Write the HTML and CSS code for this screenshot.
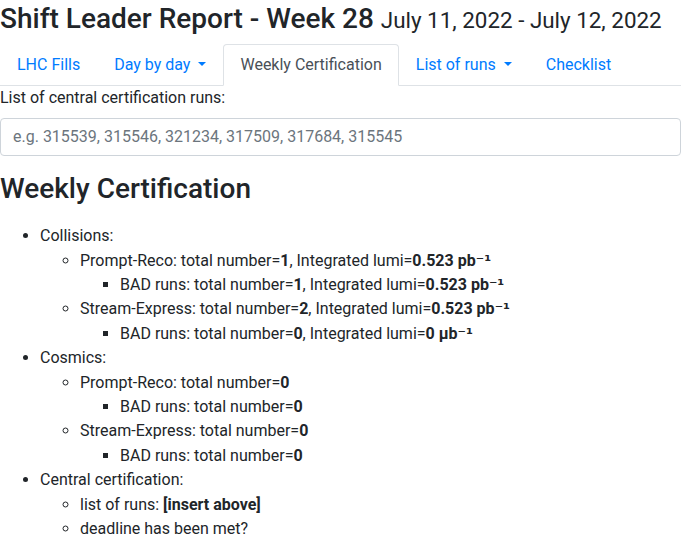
FILE: index.html
```html
<!DOCTYPE html>
<html lang="en">
<head>
    <meta charset="UTF-8">
    <meta name="viewport" content="width=device-width, initial-scale=1.0">
    <title>Shift Leader Report</title>
    <link rel="stylesheet" href="styles.css">
</head>
<body>

    <h3 class="title">Shift Leader Report - Week 28 <small>July 11, 2022 - July 12, 2022</small></h3>

    <ul class="nav-tabs">
        <li><a class="nav-link" href="#">LHC Fills</a></li>
        <li><a class="nav-link dropdown-toggle" href="#">Day by day</a></li>
        <li><a class="nav-link active" href="#">Weekly Certification</a></li>
        <li><a class="nav-link dropdown-toggle" href="#">List of runs</a></li>
        <li><a class="nav-link" href="#">Checklist</a></li>
    </ul>

    <div class="form-group">
        <label for="runs">List of central certification runs:</label>
        <input type="text" id="runs" class="form-control" placeholder="e.g. 315539, 315546, 321234, 317509, 317684, 315545">
    </div>

    <h3 class="section-title">Weekly Certification</h3>

    <ul class="report">
        <li>Collisions:
            <ul>
                <li>Prompt-Reco: total number=<b>1</b>, Integrated lumi=<b>0.523 pb<span class="unit">⁻¹</span></b>
                    <ul>
                        <li>BAD runs: total number=<b>1</b>, Integrated lumi=<b>0.523 pb<span class="unit">⁻¹</span></b></li>
                    </ul>
                </li>
                <li>Stream-Express: total number=<b>2</b>, Integrated lumi=<b>0.523 pb<span class="unit">⁻¹</span></b>
                    <ul>
                        <li>BAD runs: total number=<b>0</b>, Integrated lumi=<b>0 μb<span class="unit">⁻¹</span></b></li>
                    </ul>
                </li>
            </ul>
        </li>
        <li>Cosmics:
            <ul>
                <li>Prompt-Reco: total number=<b>0</b>
                    <ul>
                        <li>BAD runs: total number=<b>0</b></li>
                    </ul>
                </li>
                <li>Stream-Express: total number=<b>0</b>
                    <ul>
                        <li>BAD runs: total number=<b>0</b></li>
                    </ul>
                </li>
            </ul>
        </li>
        <li>Central certification:
            <ul>
                <li>list of runs: <b>[insert above]</b></li>
                <li>deadline has been met?</li>
            </ul>
        </li>
    </ul>

</body>
</html>
```

FILE: styles.css
```css
body {
    margin: 0;
    font-family: Roboto, "Liberation Sans", sans-serif;
    font-size: 16px;
    line-height: 1.5;
    color: #212529;
    background-color: #fff;
}

.title {
    margin: 2px 0 8px 0;
    font-size: 28px;
    font-weight: 500;
    line-height: 1.2;
}

.title small {
    font-size: 80%;
    font-weight: 400;
}

.nav-tabs {
    display: flex;
    list-style: none;
    margin: 0;
    padding: 0;
    border-bottom: 1px solid #dee2e6;
}

.nav-tabs li {
    margin-bottom: -1px;
}

.nav-link {
    display: block;
    padding: 8px 16px;
    color: #007bff;
    text-decoration: none;
    border: 1px solid transparent;
    border-top-left-radius: 4px;
    border-top-right-radius: 4px;
}

.nav-link.active {
    color: #495057;
    background-color: #fff;
    border-color: #dee2e6 #dee2e6 #fff;
}

.dropdown-toggle::after {
    display: inline-block;
    margin-left: 8px;
    vertical-align: 0.255em;
    content: "";
    border-top: 0.3em solid;
    border-right: 0.3em solid transparent;
    border-left: 0.3em solid transparent;
}

.form-group {
    margin-bottom: 16px;
}

label {
    display: inline-block;
    margin-bottom: 8px;
}

.form-control {
    display: block;
    width: 100%;
    height: 38px;
    padding: 6px 12px;
    font-family: inherit;
    font-size: 16px;
    line-height: 1.5;
    color: #495057;
    border: 1px solid #ced4da;
    border-radius: 4px;
    box-sizing: border-box;
}

.form-control::placeholder {
    color: #6c757d;
}

.section-title {
    margin: 0 0 19px 0;
    font-size: 28px;
    font-weight: 500;
    line-height: 1.2;
}

.report {
    margin: 0;
    padding-left: 40px;
    line-height: 24.4px;
}

.report ul {
    margin: 0;
    padding-left: 40px;
}

.unit {
    font-family: "DejaVu Sans", sans-serif;
}

b {
    font-weight: bolder;
}
```
